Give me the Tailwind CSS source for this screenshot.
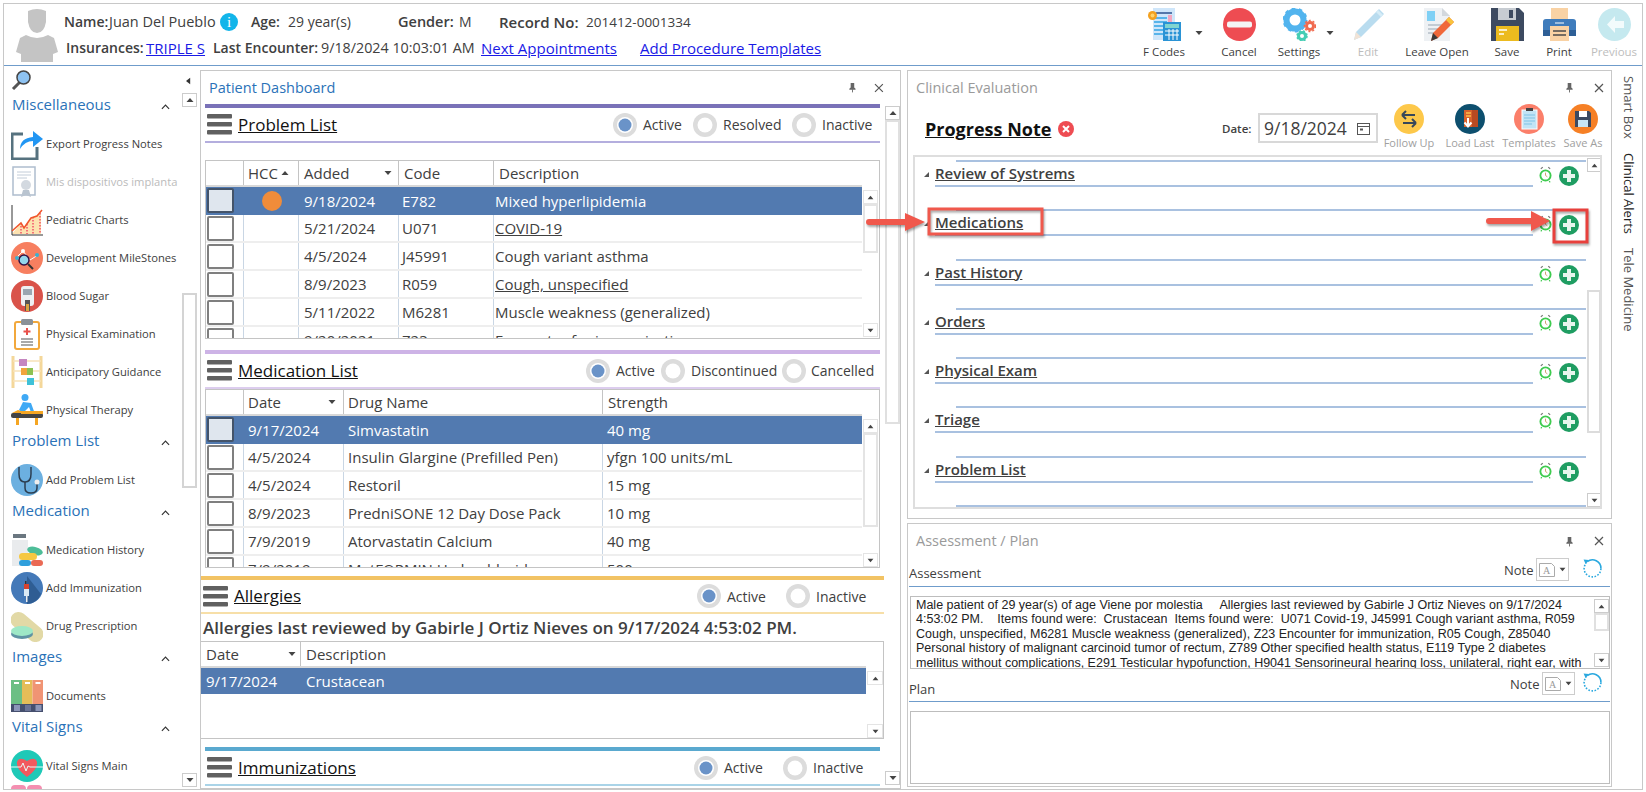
<!DOCTYPE html>
<html lang="en">
<head>
  <meta charset="UTF-8" />
  <title>Progress Note</title>
  <script src="https://cdn.jsdelivr.net/npm/@tailwindcss/browser@4"></script>
</head>
<body class="bg-white">
<svg class="hidden">
  <symbol id="up" viewBox="0 0 8 6"><path d="M4 1 7.5 5H.5z" fill="#444"/></symbol>
  <symbol id="down" viewBox="0 0 8 6"><path d="M.5 1h7L4 5z" fill="#444"/></symbol>
  <symbol id="left" viewBox="0 0 6 8"><path d="M5 0v8L0 4z" fill="#333"/></symbol>
  <symbol id="menu" viewBox="0 0 25 21"><rect x="0" y="0" width="25" height="4.5" rx="1" fill="#606060"/><rect x="0" y="8" width="25" height="4.5" rx="1" fill="#606060"/><rect x="0" y="16" width="25" height="4.5" rx="1" fill="#606060"/></symbol>
  <symbol id="chev" viewBox="0 0 10 6"><path d="M1 5l4-4 4 4" fill="none" stroke="#333" stroke-width="1.3"/></symbol>
  <symbol id="pin" viewBox="0 0 10 12"><path d="M3 1h4v5l1.5 1.500v1h-7v-1L3 6z" fill="#666"/><rect x="4.500" y="8" width="1" height="3.500" fill="#666"/></symbol>
  <symbol id="close" viewBox="0 0 10 10"><path d="M1 1l8 8M9 1l-8 8" stroke="#555" stroke-width="1.200"/></symbol>
  <symbol id="clock" viewBox="0 0 14 18"><path d="M2 3l2-2M12 3l-2-2" stroke="#777" stroke-width="1.300"/><circle cx="7" cy="10" r="5.500" fill="#fff" stroke="#3ecb4f" stroke-width="2"/><path d="M7 7v3l2 1.500" fill="none" stroke="#c96" stroke-width="1"/><path d="M3 16l-1 1.500M11 16l1 1.500" stroke="#3ecb4f" stroke-width="1.200"/></symbol>
  <symbol id="plus" viewBox="0 0 20 20"><circle cx="10" cy="10" r="10" fill="#1f9d62"/><path d="M8 4h4v4h4v4h-4v4H8v-4H4V8h4z" fill="#e8f6ee"/></symbol>
  <symbol id="note" viewBox="0 0 18 14"><path d="M.5.500h12l3 3v10H.5z" fill="#fff" stroke="#aaa"/><text x="4" y="11" font-size="10" fill="#999" font-family="Liberation Serif">A</text></symbol>
  <symbol id="refresh" viewBox="0 0 20 20"><path d="M5 3.500A8 8 0 0 1 18 10" fill="none" stroke="#29a8df" stroke-width="1.500"/><path d="M18 10a8 8 0 0 1-16 0 8 8 0 0 1 2-5" fill="none" stroke="#29a8df" stroke-width="1.500" stroke-dasharray="1.500 1.500"/><path d="M1.500 1.500l5 .5-3 4z" fill="#29a8df"/></symbol>
  <symbol id="radioOn" viewBox="0 0 24 24"><circle cx="12" cy="12" r="12" fill="#dcdcdc"/><circle cx="12" cy="12" r="8" fill="#fff"/><circle cx="12" cy="12" r="6.500" fill="#6a93c8"/></symbol>
  <symbol id="radioOff" viewBox="0 0 24 24"><circle cx="12" cy="12" r="12" fill="#dcdcdc"/><circle cx="12" cy="12" r="7.500" fill="#fff"/></symbol>
</svg>

<div class="relative w-[1646px] h-[792px] overflow-hidden bg-white font-['Open_Sans',sans-serif] text-[#404040]">
  <div class="mt-[3px] ml-[3px] w-[1640px] h-[787px] border border-[#c8c8c8] flex flex-col">

    <!-- Patient header -->
    <header class="h-[62px] shrink-0 border-b border-[#6f9ccb] flex">
      <div class="w-[60px] shrink-0 pl-[10px] pt-[4px]">
        <svg width="46" height="54" viewBox="0 0 46 54"><path d="M14 3q9-4 18 0v11q-2 11-9 11t-9-11z" fill="#c4c4c4"/><path d="M12 27q11 6 22 0l6 3 4 14-5 2v8H7v-8l-5-2 4-14z" fill="#c4c4c4"/></svg>
      </div>
      <div class="w-[770px] shrink-0 text-[14px] leading-[20px]">
        <div class="flex items-center h-[20px] mt-[8px] whitespace-nowrap">
          <span class="w-[45px] font-semibold">Name:</span>
          <span class="w-[111px] text-[14.500px]">Juan Del Pueblo</span>
          <span class="w-[18px] h-[18px] rounded-full bg-[#12b5ea] text-white text-center text-[15px] leading-[18px] font-['Liberation_Serif',serif]">i</span>
          <span class="w-[37px] ml-[13px] font-semibold">Age:</span>
          <span class="w-[110px]">29 year(s)</span>
          <span class="w-[61px] font-semibold text-[14.500px]">Gender:</span>
          <span class="w-[40px]">M</span>
          <span class="w-[87px] font-semibold text-[15px]">Record No:</span>
          <span class="text-[13.500px]">201412-0001334</span>
        </div>
        <div class="flex items-center h-[20px] mt-[6px] ml-[2px] whitespace-nowrap">
          <span class="w-[80px] font-semibold">Insurances:</span>
          <a class="w-[67px] text-[15px] text-[#1a1ae6] underline">TRIPLE S</a>
          <span class="w-[108px] font-semibold">Last Encounter:</span>
          <span class="w-[160px] text-[14.300px]">9/18/2024 10:03:01 AM</span>
          <a class="w-[159px] text-[15px] text-[#1a1ae6] underline">Next Appointments</a>
          <a class="text-[15px] text-[#1a1ae6] underline">Add Procedure Templates</a>
        </div>
      </div>
      <!-- Toolbar -->
      <div class="flex text-[11.5px] text-center pt-[4px] ml-[298px]">
        <div class="w-[64px] flex flex-col items-center">
          <svg width="33" height="33" viewBox="0 0 33 33"><rect x="5" y="0" width="22" height="32" fill="#cfe6fa"/><rect x="8" y="4" width="16" height="2" fill="#5577aa"/><rect x="20" y="7" width="4" height="10" fill="#f4a6c0"/><path d="M6 10h13M6 14h13M6 18h13M6 22h13M6 26h13" stroke="#58b4ea" stroke-width="2"/><rect x="15" y="14" width="18" height="19" fill="#2a93d5"/><rect x="17" y="16" width="14" height="4" fill="#7fd4d0"/><path d="M17 23h14M17 27h14M21 21v11M25 21v11M29 21v11" stroke="#fff" stroke-width="1"/><circle cx="4.500" cy="7.500" r="4.500" fill="#f3a11f"/><circle cx="4.500" cy="7.500" r="2" fill="#ffd36b"/></svg>
          <span class="mt-[2px] leading-[18px]">F Codes</span>
        </div>
        <div class="w-[10px] pt-[22px] -ml-[1px] mr-[1px]"><svg width="8" height="6"><use href="#down"/></svg></div>
        <div class="w-[66px] flex flex-col items-center">
          <svg width="33" height="33" viewBox="0 0 33 33"><circle cx="16.500" cy="16.500" r="16.500" fill="#ee4c52"/><rect x="4" y="13.500" width="25" height="6" rx="2" fill="#f4f4f4"/></svg>
          <span class="mt-[2px] leading-[18px]">Cancel</span>
        </div>
        <div class="w-[54px] flex flex-col items-center">
          <svg width="33" height="33" viewBox="0 0 33 33"><circle cx="12" cy="12" r="8.500" fill="none" stroke="#52b4ee" stroke-width="6"/><circle cx="12" cy="12" r="11" fill="none" stroke="#52b4ee" stroke-width="3" stroke-dasharray="3.500 3.400"/><circle cx="27" cy="18" r="3.500" fill="none" stroke="#f06a4f" stroke-width="3"/><circle cx="27" cy="18" r="5.500" fill="none" stroke="#f06a4f" stroke-width="1.500" stroke-dasharray="2 2"/><circle cx="19" cy="28" r="3.500" fill="none" stroke="#45cdb4" stroke-width="3"/><circle cx="19" cy="28" r="5" fill="none" stroke="#45cdb4" stroke-width="1.500" stroke-dasharray="2 2"/></svg>
          <span class="mt-[2px] leading-[18px]">Settings</span>
        </div>
        <div class="w-[17px] pt-[22px]"><svg width="8" height="6"><use href="#down"/></svg></div>
        <div class="w-[50px] flex flex-col items-center text-[#bdbdbd]">
          <svg width="33" height="33" viewBox="0 0 33 33"><path d="M27 1l5 5L9 29l-7 3 2-8z" fill="#b9dcef"/><path d="M4 24l5 5-7 3z" fill="#f1e3d6"/><path d="M25 3l5 5" stroke="#d6ecf7" stroke-width="3"/></svg>
          <span class="mt-[2px] leading-[18px]">Edit</span>
        </div>
        <div class="w-[88px] flex flex-col items-center">
          <svg width="33" height="33" viewBox="0 0 33 33"><path d="M3 0h18l8 8v25H3z" fill="#eef1f4"/><path d="M21 0l8 8h-8z" fill="#d3d8dd"/><rect x="6" y="3" width="8" height="10" fill="#7fd0f5"/><path d="M7 17h14M7 21h11M7 25h8" stroke="#c3cbd3" stroke-width="2"/><path d="M28 9l5 5-16 16-7 3 2-8z" fill="#f0683a"/><path d="M28 9l5 5-3 3-5-5z" fill="#f8c33c"/><path d="M12 25l5 5-7 3z" fill="#3a3a3a"/></svg>
          <span class="mt-[2px] leading-[18px]">Leave Open</span>
        </div>
        <div class="w-[52px] flex flex-col items-center">
          <svg width="33" height="33" viewBox="0 0 33 33"><path d="M0 0h28l5 5v28H0z" fill="#3d4a60"/><rect x="7" y="0" width="18" height="12" fill="#c7ccd2"/><rect x="18" y="2" width="4" height="8" fill="#3d4a60"/><rect x="5" y="18" width="23" height="15" fill="#ecbb1f"/><path d="M8 22h8M8 26h5" stroke="#fff" stroke-width="1.500"/></svg>
          <span class="mt-[2px] leading-[18px]">Save</span>
        </div>
        <div class="w-[52px] flex flex-col items-center">
          <svg width="33" height="33" viewBox="0 0 33 33"><rect x="8" y="0" width="17" height="12" fill="#f9d2a4"/><path d="M0 14q0-3 3-3h27q3 0 3 3v12H0z" fill="#3f7cbc"/><rect x="0" y="22" width="33" height="6" fill="#2e5f96"/><rect x="7" y="18" width="19" height="15" fill="#f9d2a4"/><path d="M10 23h13M10 27h13" stroke="#4b4b4b" stroke-width="1.300"/><path d="M12 15h9" stroke="#fff" stroke-width="1"/></svg>
          <span class="mt-[2px] leading-[18px]">Print</span>
        </div>
        <div class="w-[58px] flex flex-col items-center text-[#bdbdbd]">
          <svg width="33" height="33" viewBox="0 0 33 33"><circle cx="16.500" cy="16.500" r="16.500" fill="#c5e9ef"/><path d="M17 8l-8 8.500 8 8.500v-5h9v-7h-9z" fill="#f2fbfc"/></svg>
          <span class="mt-[2px] leading-[18px]">Previous</span>
        </div>
      </div>
    </header>

    <main class="flex flex-1 min-h-0">
      <!-- Left menu -->
      <aside class="w-[196px] shrink-0 flex">
        <div class="w-[178px] shrink-0 overflow-hidden pl-[7px] text-[11.2px]">
          <div class="h-[27px] pt-[4px]">
            <svg width="20" height="20" viewBox="0 0 20 20"><path d="M9 12l-7 7" stroke="#555" stroke-width="3"/><circle cx="12.500" cy="7.500" r="6.500" fill="#8ec3f2" stroke="#444" stroke-width="1.500"/></svg>
          </div>

          <div class="h-[22px] mb-[10px] flex items-center pl-[1px] text-[15px] text-[#2a72b8]"><span class="w-[149px]">Miscellaneous</span><svg class="mt-[6px]" width="9" height="6"><use href="#chev"/></svg></div>
          <div class="h-[38px] flex items-center gap-[3px]">
            <svg width="32" height="32" viewBox="0 0 32 32"><path d="M12 6H1v25h25V19" fill="none" stroke="#56727f" stroke-width="3"/><path d="M9 21q0-11 13-12V3l10 8-10 8v-6q-8 0-13 8z" fill="#2196f3"/></svg>
            <span>Export Progress Notes</span>
          </div>
          <div class="h-[38px] flex items-center gap-[3px] text-[#bbb]">
            <svg width="32" height="32" viewBox="0 0 32 32"><rect x="2" y="1" width="22" height="28" fill="#fff" stroke="#aebdce" stroke-width="1.500"/><path d="M6 6h14M6 9h14M6 12h10" stroke="#c2ccd8"/><circle cx="15" cy="19" r="5" fill="#d3d9e0"/><path d="M12 24l-2 7 5-2 5 2-2-7z" fill="#b9c4d0"/></svg>
            <span>Mis dispositivos implanta</span>
          </div>
          <div class="h-[38px] flex items-center gap-[3px]">
            <svg width="32" height="32" viewBox="0 0 32 32"><path d="M1 30l9-11 3 5 7-10 10-5v21z" fill="#fde2b0"/><path d="M1 1v30h31" fill="none" stroke="#333" stroke-width="1"/><path d="M10 19v11M16 20v10M22 13v17M29 9v21" stroke="#e04" stroke-width="1" stroke-dasharray="1.500 1.500"/><path d="M1 27l9-8 3 5 7-10 6-2 5-6" fill="none" stroke="#f0552b" stroke-width="1.500"/></svg>
            <span>Pediatric Charts</span>
          </div>
          <div class="h-[38px] flex items-center gap-[3px]">
            <svg width="32" height="32" viewBox="0 0 32 32"><circle cx="16" cy="16" r="16" fill="#f77f60"/><path d="M5 16l7-7 7 9 8-5" fill="none" stroke="#fff"/><circle cx="13" cy="18" r="5" fill="#93d6ec" stroke="#314" stroke-width="1.500"/><path d="M17 22l5 5" stroke="#333" stroke-width="2"/><circle cx="6" cy="16" r="2" fill="#3ab0d0"/><circle cx="12" cy="9" r="2" fill="#fff"/><circle cx="26" cy="13" r="2" fill="#3ab0d0"/></svg>
            <span>Development MileStones</span>
          </div>
          <div class="h-[38px] flex items-center gap-[3px]">
            <svg width="32" height="32" viewBox="0 0 32 32"><circle cx="16" cy="16" r="16" fill="#d9534a"/><rect x="10" y="6" width="13" height="20" rx="3" fill="#eef0f2"/><rect x="12" y="9" width="9" height="6" fill="#9aa6b0"/><rect x="14" y="20" width="5" height="11" fill="#555"/><rect x="15" y="24" width="3" height="7" fill="#d9a441"/></svg>
            <span>Blood Sugar</span>
          </div>
          <div class="h-[38px] flex items-center gap-[3px]">
            <svg width="32" height="32" viewBox="0 0 32 32"><rect x="4" y="4" width="24" height="27" rx="2" fill="#fff" stroke="#f2a83c" stroke-width="2"/><rect x="10" y="1" width="12" height="6" rx="1.500" fill="#8b9197"/><path d="M16 10v7M12.500 13.500h7" stroke="#e8504a" stroke-width="2"/><path d="M10 21h12M10 24h12M10 27h12" stroke="#555" stroke-width="1.200"/></svg>
            <span>Physical Examination</span>
          </div>
          <div class="h-[38px] flex items-center gap-[3px]">
            <svg width="32" height="32" viewBox="0 0 32 32"><path d="M2 0v32M30 0v32" stroke="#f4d79a" stroke-width="3"/><path d="M2 5h28M2 15h28M2 25h28" stroke="#f7e2b8" stroke-width="1.500"/><rect x="8" y="3" width="8" height="7" fill="#c586c0"/><rect x="10" y="12" width="6" height="7" fill="#f1a43c"/><rect x="16" y="12" width="6" height="7" fill="#8cc152"/><rect x="16" y="22" width="7" height="7" fill="#3fc1d8"/></svg>
            <span>Anticipatory Guidance</span>
          </div>
          <div class="h-[38px] flex items-center gap-[3px]">
            <svg width="32" height="32" viewBox="0 0 32 32"><circle cx="14" cy="3.500" r="3.500" fill="#3fa9f5"/><path d="M12 8l8 1 4 11-3 1-3-8-6 6-4-3z" fill="#3fa9f5"/><rect x="0" y="19" width="32" height="5" rx="2" fill="#444"/><path d="M1 19l6-3 9 3z" fill="#f5a623"/><rect x="10" y="17" width="22" height="3" fill="#f5a623"/><rect x="5" y="24" width="3" height="7" fill="#f5a623"/><rect x="24" y="24" width="3" height="7" fill="#f5a623"/></svg>
            <span>Physical Therapy</span>
          </div>

          <div class="h-[22px] mb-[10px] flex items-center pl-[1px] text-[15px] text-[#2a72b8]"><span class="w-[149px]">Problem List</span><svg class="mt-[6px]" width="9" height="6"><use href="#chev"/></svg></div>
          <div class="h-[38px] flex items-center gap-[3px]">
            <svg width="32" height="32" viewBox="0 0 32 32"><circle cx="16" cy="16" r="16" fill="#6cb0e0"/><path d="M8 3v7q0 8 6 8t6-8V3" fill="none" stroke="#2c3e50" stroke-width="1.500"/><path d="M14 18v6q0 5 6 5t6-5v-4" fill="none" stroke="#2c3e50" stroke-width="1.500"/><circle cx="26" cy="18" r="2.500" fill="#eee"/></svg>
            <span>Add Problem List</span>
          </div>

          <div class="h-[22px] mb-[10px] flex items-center pl-[1px] text-[15px] text-[#2a72b8]"><span class="w-[149px]">Medication</span><svg class="mt-[6px]" width="9" height="6"><use href="#chev"/></svg></div>
          <div class="h-[38px] flex items-center gap-[3px]">
            <svg width="32" height="32" viewBox="0 0 32 32"><rect x="2" y="0" width="13" height="4" fill="#6b7780"/><path d="M1 6h16v26H1z" fill="#e9ebed"/><ellipse cx="24" cy="17" rx="8" ry="4" fill="#4dbd98" transform="rotate(15 24 17)"/><rect x="8" y="19" width="18" height="7" rx="3.500" fill="#f5c842"/><rect x="8" y="26" width="12" height="6" rx="3" fill="#2f9fdc"/><rect x="20" y="26" width="12" height="6" rx="3" fill="#ea6a55"/></svg>
            <span>Medication History</span>
          </div>
          <div class="h-[38px] flex items-center gap-[3px]">
            <svg width="32" height="32" viewBox="0 0 32 32"><circle cx="16" cy="16" r="16" fill="#4479b8"/><path d="M16 4l14 18a16 16 0 0 1-14 10z" fill="#2f5d93"/><rect x="14" y="9" width="1.500" height="4" fill="#333"/><rect x="13" y="12" width="5" height="5" fill="#d8432f"/><rect x="13" y="17" width="5" height="7" fill="#d9e9f5"/><rect x="15" y="24" width="1.500" height="6" fill="#eee"/></svg>
            <span>Add Immunization</span>
          </div>
          <div class="h-[38px] flex items-center gap-[3px]">
            <svg width="32" height="32" viewBox="0 0 32 32"><rect x="-3" y="9" width="38" height="16" rx="8" fill="#e2d9a6" transform="rotate(40 16 17)"/><ellipse cx="11" cy="24" rx="11" ry="5" fill="#5f93a3"/><ellipse cx="11" cy="21" rx="11" ry="5" fill="#9ee8c6"/></svg>
            <span>Drug Prescription</span>
          </div>

          <div class="h-[22px] mb-[10px] flex items-center pl-[1px] text-[15px] text-[#2a72b8]"><span class="w-[149px]">Images</span><svg class="mt-[6px]" width="9" height="6"><use href="#chev"/></svg></div>
          <div class="h-[38px] flex items-center gap-[3px]">
            <svg width="32" height="32" viewBox="0 0 32 32"><rect x="0" y="0" width="11" height="24" fill="#6cbf84"/><rect x="11" y="0" width="10.500" height="24" fill="#e5bd58"/><rect x="21.500" y="0" width="10.500" height="24" fill="#f09474"/><rect x="0" y="24" width="32" height="8" fill="#454f6e"/><path d="M3 3h5M14 3h5M24.500 3h5" stroke="#fff" stroke-width="2"/><rect x="3" y="25" width="6" height="6" fill="#8c96b8"/><rect x="14" y="25" width="6" height="6" fill="#6a7396"/><rect x="24.500" y="25" width="6" height="6" fill="#8c96b8"/></svg>
            <span>Documents</span>
          </div>

          <div class="h-[22px] mb-[10px] flex items-center pl-[1px] text-[15px] text-[#2a72b8]"><span class="w-[149px]">Vital Signs</span><svg class="mt-[6px]" width="9" height="6"><use href="#chev"/></svg></div>
          <div class="h-[38px] flex items-center gap-[3px]">
            <svg width="32" height="32" viewBox="0 0 32 32"><circle cx="16" cy="16" r="16" fill="#1fc9b7"/><path d="M16 27Q5 19 6 12q2-6 10-1 8-5 10 1 1 7-10 15z" fill="#f2595e"/><path d="M0 17h10l2-4 3 8 2-5 2 1h13" fill="none" stroke="#e8fbf9" stroke-width="1"/></svg>
            <span>Vital Signs Main</span>
          </div>
          <div class="h-[4px] w-[32px] flex gap-[1px] overflow-hidden"><div class="w-[15px] h-[8px] rounded-full bg-[#f48fb1]"></div><div class="w-[15px] h-[8px] rounded-full bg-[#f48fb1]"></div></div>
        </div>
        <div class="w-[15px] shrink-0 relative">
          <svg class="absolute left-[4px] top-[11px]" width="5" height="8"><use href="#left"/></svg>
          <div class="mt-[27px] h-[14px] border border-[#ccc] flex items-center justify-center"><svg width="8" height="6"><use href="#up"/></svg></div>
          <div class="mt-[186px] h-[195px] border-2 border-[#d4d4d4]"></div>
          <div class="mt-[285px] h-[14px] border border-[#ccc] flex items-center justify-center"><svg width="8" height="6"><use href="#down"/></svg></div>
        </div>
      </aside>

      <!-- Patient dashboard -->
      <section class="w-[701px] shrink-0 mt-[4px] border border-[#c8c8c8] flex">
        <div class="w-[683px] shrink-0 overflow-hidden">
          <div class="h-[33px] flex items-center pl-[8px] text-[14.500px] text-[#2a72b8]">
            <span class="w-[648px]">Patient Dashboard</span>
            <svg width="9" height="11"><use href="#pin"/></svg>
            <svg class="ml-[17px]" width="10" height="10"><use href="#close"/></svg>
          </div>

          <div class="px-[4px]">
            <div class="h-[4px] bg-[#7a72b8]"></div>
            <div class="h-[33px] flex items-center pl-[2px]">
              <svg width="25" height="21"><use href="#menu"/></svg>
              <span class="w-[375px] ml-[6px] text-[17px] text-[#111] underline">Problem List</span>
              <div class="w-[80px] flex items-center gap-[6px] text-[14px]"><svg width="24" height="24"><use href="#radioOn"/></svg>Active</div>
              <div class="w-[99px] flex items-center gap-[6px] text-[14px]"><svg width="24" height="24"><use href="#radioOff"/></svg>Resolved</div>
              <div class="flex items-center gap-[6px] text-[14px]"><svg width="24" height="24"><use href="#radioOff"/></svg>Inactive</div>
            </div>
            <div class="h-[2px] bg-[#b4aede]"></div>

            <div class="mt-[17px] h-[179px] border border-[#c4c4c4] flex overflow-hidden text-[15px]">
              <div class="w-[656px] shrink-0 overflow-hidden">
                <div class="h-[26px] flex items-center border-b-2 border-[#d8d8d8]">
                  <div class="w-[38px] h-full border-r border-[#c4c4c4]"></div>
                  <div class="w-[55px] h-full border-r border-[#c4c4c4] flex items-center pl-[4px] gap-[3px]">HCC<svg width="8" height="6"><use href="#up"/></svg></div>
                  <div class="w-[100px] h-full border-r border-[#c4c4c4] flex items-center pl-[5px]"><span class="w-[80px]">Added</span><svg width="8" height="6"><use href="#down"/></svg></div>
                  <div class="w-[95px] h-full border-r border-[#c4c4c4] flex items-center pl-[5px]">Code</div>
                  <div class="pl-[5px]">Description</div>
                </div>
                <div class="h-[28px] flex items-center bg-[#527ab0] text-white">
                  <div class="w-[38px] h-full border-r border-[#527ab0] pl-[1px] pt-[1px]"><div class="w-[27px] h-[25px] bg-[#dfe6ee] border-2 border-[#44546a] rounded-[2px]"></div></div>
                  <div class="w-[55px] h-full flex items-center justify-center"><div class="w-[20px] h-[20px] rounded-full bg-[#f08c3a]"></div></div>
                  <div class="w-[100px] pl-[5px]">9/18/2024</div>
                  <div class="w-[95px] pl-[3px]">E782</div>
                  <div class="pl-[1px]">Mixed hyperlipidemia</div>
                </div>
                <div class="h-[28px] flex items-center border-b-2 border-[#eeeeee]">
                  <div class="w-[38px] h-full border-r border-[#c9d6e4] pl-[1px] pt-[1px]"><div class="w-[27px] h-[25px] bg-white border-2 border-[#7f7f7f] rounded-[2px]"></div></div>
                  <div class="w-[55px] h-full border-r border-[#c9d6e4]"></div>
                  <div class="w-[100px] pl-[5px] h-full flex items-center border-r border-[#c9d6e4]">5/21/2024</div>
                  <div class="w-[95px] pl-[3px] h-full flex items-center border-r border-[#c9d6e4]">U071</div>
                  <div class="pl-[1px] underline">COVID-19</div>
                </div>
                <div class="h-[28px] flex items-center border-b-2 border-[#eeeeee]">
                  <div class="w-[38px] h-full border-r border-[#c9d6e4] pl-[1px] pt-[1px]"><div class="w-[27px] h-[25px] bg-white border-2 border-[#7f7f7f] rounded-[2px]"></div></div>
                  <div class="w-[55px] h-full border-r border-[#c9d6e4]"></div>
                  <div class="w-[100px] pl-[5px] h-full flex items-center border-r border-[#c9d6e4]">4/5/2024</div>
                  <div class="w-[95px] pl-[3px] h-full flex items-center border-r border-[#c9d6e4]">J45991</div>
                  <div class="pl-[1px]">Cough variant asthma</div>
                </div>
                <div class="h-[28px] flex items-center border-b-2 border-[#eeeeee]">
                  <div class="w-[38px] h-full border-r border-[#c9d6e4] pl-[1px] pt-[1px]"><div class="w-[27px] h-[25px] bg-white border-2 border-[#7f7f7f] rounded-[2px]"></div></div>
                  <div class="w-[55px] h-full border-r border-[#c9d6e4]"></div>
                  <div class="w-[100px] pl-[5px] h-full flex items-center border-r border-[#c9d6e4]">8/9/2023</div>
                  <div class="w-[95px] pl-[3px] h-full flex items-center border-r border-[#c9d6e4]">R059</div>
                  <div class="pl-[1px] underline">Cough, unspecified</div>
                </div>
                <div class="h-[28px] flex items-center border-b-2 border-[#eeeeee]">
                  <div class="w-[38px] h-full border-r border-[#c9d6e4] pl-[1px] pt-[1px]"><div class="w-[27px] h-[25px] bg-white border-2 border-[#7f7f7f] rounded-[2px]"></div></div>
                  <div class="w-[55px] h-full border-r border-[#c9d6e4]"></div>
                  <div class="w-[100px] pl-[5px] h-full flex items-center border-r border-[#c9d6e4]">5/11/2022</div>
                  <div class="w-[95px] pl-[3px] h-full flex items-center border-r border-[#c9d6e4]">M6281</div>
                  <div class="pl-[1px]">Muscle weakness (generalized)</div>
                </div>
                <div class="h-[28px] flex items-center border-b-2 border-[#eeeeee]">
                  <div class="w-[38px] h-full border-r border-[#c9d6e4] pl-[1px] pt-[1px]"><div class="w-[27px] h-[25px] bg-white border-2 border-[#7f7f7f] rounded-[2px]"></div></div>
                  <div class="w-[55px] h-full border-r border-[#c9d6e4]"></div>
                  <div class="w-[100px] pl-[5px] h-full flex items-center border-r border-[#c9d6e4]">9/20/2021</div>
                  <div class="w-[95px] pl-[3px] h-full flex items-center border-r border-[#c9d6e4]">Z23</div>
                  <div class="pl-[1px]">Encounter for immunization</div>
                </div>
              </div>
              <div class="w-[16px] shrink-0 pl-[1px]">
                <div class="mt-[29px] h-[14px] border border-[#e4e4e4] flex items-center justify-center"><svg width="7" height="5"><use href="#up"/></svg></div>
                <div class="h-[49px] border-2 border-[#e4e4e4]"></div>
                <div class="mt-[70px] h-[14px] border border-[#e4e4e4] flex items-center justify-center"><svg width="7" height="5"><use href="#down"/></svg></div>
              </div>
            </div>

            <div class="mt-[11px] h-[4px] bg-[#cdb3e6]"></div>
            <div class="h-[33px] flex items-center pl-[2px]">
              <svg width="25" height="21"><use href="#menu"/></svg>
              <span class="w-[348px] ml-[6px] text-[17px] text-[#111] underline">Medication List</span>
              <div class="w-[75px] flex items-center gap-[6px] text-[14px]"><svg width="24" height="24"><use href="#radioOn"/></svg>Active</div>
              <div class="w-[121px] flex items-center gap-[6px] text-[14px]"><svg width="24" height="24"><use href="#radioOff"/></svg>Discontinued</div>
              <div class="flex items-center gap-[5px] text-[14px]"><svg width="24" height="24"><use href="#radioOff"/></svg>Cancelled</div>
            </div>
            <div class="h-[2px] bg-[#dccdee]"></div>

            <div class="h-[179px] border border-[#c4c4c4] flex overflow-hidden text-[15px]">
              <div class="w-[656px] shrink-0 overflow-hidden">
                <div class="h-[26px] flex items-center border-b-2 border-[#d8d8d8]">
                  <div class="w-[38px] h-full border-r border-[#c4c4c4]"></div>
                  <div class="w-[100px] h-full border-r border-[#c4c4c4] flex items-center pl-[4px]"><span class="w-[80px]">Date</span><svg width="8" height="6"><use href="#down"/></svg></div>
                  <div class="w-[259px] h-full border-r border-[#c4c4c4] flex items-center pl-[4px]">Drug Name</div>
                  <div class="pl-[5px]">Strength</div>
                </div>
                <div class="h-[28px] flex items-center bg-[#527ab0] text-white">
                  <div class="w-[38px] h-full pl-[1px] pt-[1px]"><div class="w-[27px] h-[25px] bg-[#dfe6ee] border-2 border-[#44546a] rounded-[2px]"></div></div>
                  <div class="w-[100px] pl-[4px]">9/17/2024</div>
                  <div class="w-[259px] pl-[4px]">Simvastatin</div>
                  <div class="pl-[4px]">40 mg</div>
                </div>
                <div class="h-[28px] flex items-center border-b-2 border-[#eeeeee]">
                  <div class="w-[38px] h-full border-r border-[#c9d6e4] pl-[1px] pt-[1px]"><div class="w-[27px] h-[25px] bg-white border-2 border-[#7f7f7f] rounded-[2px]"></div></div>
                  <div class="w-[100px] pl-[4px] h-full flex items-center border-r border-[#c9d6e4]">4/5/2024</div>
                  <div class="w-[259px] pl-[4px] h-full flex items-center border-r border-[#c9d6e4]">Insulin Glargine (Prefilled Pen)</div>
                  <div class="pl-[4px]">yfgn 100 units/mL</div>
                </div>
                <div class="h-[28px] flex items-center border-b-2 border-[#eeeeee]">
                  <div class="w-[38px] h-full border-r border-[#c9d6e4] pl-[1px] pt-[1px]"><div class="w-[27px] h-[25px] bg-white border-2 border-[#7f7f7f] rounded-[2px]"></div></div>
                  <div class="w-[100px] pl-[4px] h-full flex items-center border-r border-[#c9d6e4]">4/5/2024</div>
                  <div class="w-[259px] pl-[4px] h-full flex items-center border-r border-[#c9d6e4]">Restoril</div>
                  <div class="pl-[4px]">15 mg</div>
                </div>
                <div class="h-[28px] flex items-center border-b-2 border-[#eeeeee]">
                  <div class="w-[38px] h-full border-r border-[#c9d6e4] pl-[1px] pt-[1px]"><div class="w-[27px] h-[25px] bg-white border-2 border-[#7f7f7f] rounded-[2px]"></div></div>
                  <div class="w-[100px] pl-[4px] h-full flex items-center border-r border-[#c9d6e4]">8/9/2023</div>
                  <div class="w-[259px] pl-[4px] h-full flex items-center border-r border-[#c9d6e4]">PredniSONE 12 Day Dose Pack</div>
                  <div class="pl-[4px]">10 mg</div>
                </div>
                <div class="h-[28px] flex items-center border-b-2 border-[#eeeeee]">
                  <div class="w-[38px] h-full border-r border-[#c9d6e4] pl-[1px] pt-[1px]"><div class="w-[27px] h-[25px] bg-white border-2 border-[#7f7f7f] rounded-[2px]"></div></div>
                  <div class="w-[100px] pl-[4px] h-full flex items-center border-r border-[#c9d6e4]">7/9/2019</div>
                  <div class="w-[259px] pl-[4px] h-full flex items-center border-r border-[#c9d6e4]">Atorvastatin Calcium</div>
                  <div class="pl-[4px]">40 mg</div>
                </div>
                <div class="h-[28px] flex items-center border-b-2 border-[#eeeeee]">
                  <div class="w-[38px] h-full border-r border-[#c9d6e4] pl-[1px] pt-[1px]"><div class="w-[27px] h-[25px] bg-white border-2 border-[#7f7f7f] rounded-[2px]"></div></div>
                  <div class="w-[100px] pl-[4px] h-full flex items-center border-r border-[#c9d6e4]">7/9/2019</div>
                  <div class="w-[259px] pl-[4px] h-full flex items-center border-r border-[#c9d6e4]">MetFORMIN Hydrochloride</div>
                  <div class="pl-[4px]">500 mg</div>
                </div>
              </div>
              <div class="w-[16px] shrink-0 pl-[1px]">
                <div class="mt-[29px] h-[14px] border border-[#e4e4e4] flex items-center justify-center"><svg width="7" height="5"><use href="#up"/></svg></div>
                <div class="h-[94px] border-2 border-[#e4e4e4]"></div>
                <div class="mt-[26px] h-[14px] border border-[#e4e4e4] flex items-center justify-center"><svg width="7" height="5"><use href="#down"/></svg></div>
              </div>
            </div>
          </div>

          <div class="mt-[8px] h-[4px] bg-[#f2c364]"></div>
          <div class="h-[32px] flex items-center pl-[2px]">
            <svg width="25" height="21"><use href="#menu"/></svg>
            <span class="w-[463px] ml-[6px] text-[17px] text-[#111] underline">Allergies</span>
            <div class="w-[89px] flex items-center gap-[6px] text-[14px]"><svg width="24" height="24"><use href="#radioOn"/></svg>Active</div>
            <div class="flex items-center gap-[6px] text-[14px]"><svg width="24" height="24"><use href="#radioOff"/></svg>Inactive</div>
          </div>
          <div class="h-[2px] bg-[#f7dfa8]"></div>
          <div class="h-[27px] flex items-center pl-[2px] text-[17px] font-semibold whitespace-nowrap">Allergies last reviewed by Gabirle J Ortiz Nieves on 9/17/2024 4:53:02 PM.</div>

          <div class="h-[98px] border border-[#c4c4c4] border-l-0 flex overflow-hidden text-[15px]">
            <div class="w-[665px] shrink-0">
              <div class="h-[26px] flex items-center border-b-2 border-[#d8d8d8]">
                <div class="w-[100px] h-full border-r border-[#c4c4c4] flex items-center pl-[5px]"><span class="w-[82px]">Date</span><svg width="8" height="6"><use href="#down"/></svg></div>
                <div class="pl-[5px]">Description</div>
              </div>
              <div class="h-[26px] flex items-center bg-[#527ab0] text-white">
                <div class="w-[100px] pl-[5px]">9/17/2024</div>
                <div class="pl-[5px]">Crustacean</div>
              </div>
            </div>
            <div class="w-[16px] shrink-0 ml-[1px]">
              <div class="mt-[29px] h-[14px] border border-[#e4e4e4] flex items-center justify-center"><svg width="7" height="5"><use href="#up"/></svg></div>
              <div class="mt-[39px] h-[14px] border border-[#e4e4e4] flex items-center justify-center"><svg width="7" height="5"><use href="#down"/></svg></div>
            </div>
          </div>

          <div class="px-[4px] mt-[8px]">
            <div class="h-[4px] bg-[#5aa9cf]"></div>
            <div class="h-[33px] flex items-center pl-[2px]">
              <svg width="25" height="21"><use href="#menu"/></svg>
              <span class="w-[456px] ml-[6px] text-[17px] text-[#111] underline">Immunizations</span>
              <div class="w-[89px] flex items-center gap-[6px] text-[14px]"><svg width="24" height="24"><use href="#radioOn"/></svg>Active</div>
              <div class="flex items-center gap-[6px] text-[14px]"><svg width="24" height="24"><use href="#radioOff"/></svg>Inactive</div>
            </div>
            <div class="h-[2px] bg-[#aad4e8]"></div>
          </div>
        </div>
        <div class="w-[15px] shrink-0 ml-[1px]">
          <div class="mt-[35px] h-[14px] border border-[#ccc] flex items-center justify-center"><svg width="8" height="6"><use href="#up"/></svg></div>
          <div class="h-[304px] border-2 border-[#e0e0e0]"></div>
          <div class="mt-[347px] h-[14px] border border-[#ccc] flex items-center justify-center"><svg width="8" height="6"><use href="#down"/></svg></div>
        </div>
      </section>

      <!-- Right column -->
      <div class="w-[705px] shrink-0 ml-[6px] mt-[4px] flex flex-col gap-[4px]">
        <section class="h-[449px] border border-[#c8c8c8]">
          <div class="h-[33px] flex items-center pl-[8px] text-[14.500px] text-[#9a9a9a]">
            <span class="w-[649px]">Clinical Evaluation</span>
            <svg width="9" height="11"><use href="#pin"/></svg>
            <svg class="ml-[20px]" width="10" height="10"><use href="#close"/></svg>
          </div>
          <div class="h-[51px] flex pl-[17px]">
            <div class="w-[297px] flex items-center h-[50px]">
              <span class="text-[18px] font-bold text-[#111] underline">Progress Note</span>
              <svg class="ml-[7px]" width="16" height="16" viewBox="0 0 16 16"><circle cx="8" cy="8" r="8" fill="#ee4c52"/><path d="M5 5l6 6M11 5l-6 6" stroke="#fff" stroke-width="2"/></svg>
            </div>
            <div class="w-[36px] pt-[16px] text-[11.500px] font-semibold">Date:</div>
            <div class="w-[120px] h-[30px] mt-[9px] border-2 border-[#d8d8d8] flex items-center pl-[4px] text-[17.500px]">
              <span class="w-[93px]">9/18/2024</span>
              <svg width="13" height="13" viewBox="0 0 13 13"><rect x=".5" y="1.500" width="12" height="11" fill="none" stroke="#555"/><path d="M.5 4.500h12" stroke="#555"/><rect x="3" y="6.500" width="3" height="2" fill="#555"/></svg>
            </div>
            <div class="w-[62px] flex flex-col items-center text-[11px] text-[#a0a0a0]">
              <svg width="30" height="30" viewBox="0 0 30 30"><circle cx="15" cy="15" r="15" fill="#fdc84a"/><path d="M8 11h13M8 11l4-4M8 11l4 4" fill="none" stroke="#37475a" stroke-width="2"/><path d="M22 19H9M22 19l-4-4M22 19l-4 4" fill="none" stroke="#37475a" stroke-width="2"/></svg>
              <span class="leading-[18px]">Follow Up</span>
            </div>
            <div class="w-[60px] flex flex-col items-center text-[11px] text-[#a0a0a0]">
              <svg width="30" height="30" viewBox="0 0 30 30"><circle cx="15" cy="15" r="15" fill="#0d4f6e"/><rect x="9" y="6" width="14" height="17" fill="#b84a22"/><rect x="9" y="6" width="8" height="17" fill="#d8622d"/><path d="M11 9h5M11 12h5" stroke="#fbc04a" stroke-width="1.500"/><path d="M13 14v8M9.500 18.500l3.500 4 3.500-4" fill="none" stroke="#fff" stroke-width="2"/></svg>
              <span class="leading-[18px]">Load Last</span>
            </div>
            <div class="w-[58px] flex flex-col items-center text-[11px] text-[#a0a0a0]">
              <svg width="30" height="30" viewBox="0 0 30 30"><circle cx="15" cy="15" r="15" fill="#fb7f6a"/><rect x="8" y="6" width="15" height="19" fill="#c2e4f5" stroke="#fff" stroke-width="1"/><rect x="12" y="4" width="7" height="3" fill="#444"/><path d="M10 11h11M10 14h11M10 17h11M10 20h8" stroke="#7fc3e6"/></svg>
              <span class="leading-[18px]">Templates</span>
            </div>
            <div class="w-[50px] flex flex-col items-center text-[11px] text-[#a0a0a0]">
              <svg width="30" height="30" viewBox="0 0 30 30"><circle cx="15" cy="15" r="15" fill="#f68026"/><path d="M7 7h14l2 2v14H7z" fill="#3d4a60"/><rect x="11" y="7" width="8" height="6" fill="#fff"/><rect x="10" y="16" width="10" height="7" fill="#c7e6f7"/></svg>
              <span class="leading-[18px]">Save As</span>
            </div>
          </div>

          <div class="ml-[5px] w-[689px] h-[354px] border-2 border-[#dedede] flex overflow-hidden">
            <div class="w-[671px] shrink-0 pt-[3px] text-[15px] font-semibold">
              <div class="h-[49.300px]"><div class="ml-[41px] w-[630px] h-[2px] bg-[#a9c1e0]"></div><div class="flex"><div class="w-[20px] pl-[8px] pt-[9px]"><svg width="7" height="7" viewBox="0 0 7 7"><path d="M6 1v5H1z" fill="#555"/></svg></div><div class="w-[598px] h-[25px] border-b-2 border-[#a9c1e0] leading-[22px]"><span class="underline">Review of Systrems</span></div><svg class="ml-[6px] mt-[4px]" width="13" height="17"><use href="#clock"/></svg><svg class="ml-[7px] mt-[4px]" width="20" height="20"><use href="#plus"/></svg></div></div>
              <div class="h-[49.300px]"><div class="ml-[41px] w-[630px] h-[2px] bg-[#a9c1e0]"></div><div class="flex"><div class="w-[20px] pl-[8px] pt-[9px]"><svg width="7" height="7" viewBox="0 0 7 7"><path d="M6 1v5H1z" fill="#555"/></svg></div><div class="w-[598px] h-[25px] border-b-2 border-[#a9c1e0] leading-[22px]"><span class="underline">Medications</span></div><svg class="ml-[6px] mt-[4px]" width="13" height="17"><use href="#clock"/></svg><svg class="ml-[7px] mt-[4px]" width="20" height="20"><use href="#plus"/></svg></div></div>
              <div class="h-[49.300px]"><div class="ml-[41px] w-[630px] h-[2px] bg-[#a9c1e0]"></div><div class="flex"><div class="w-[20px] pl-[8px] pt-[9px]"><svg width="7" height="7" viewBox="0 0 7 7"><path d="M6 1v5H1z" fill="#555"/></svg></div><div class="w-[598px] h-[25px] border-b-2 border-[#a9c1e0] leading-[22px]"><span class="underline">Past History</span></div><svg class="ml-[6px] mt-[4px]" width="13" height="17"><use href="#clock"/></svg><svg class="ml-[7px] mt-[4px]" width="20" height="20"><use href="#plus"/></svg></div></div>
              <div class="h-[49.300px]"><div class="ml-[41px] w-[630px] h-[2px] bg-[#a9c1e0]"></div><div class="flex"><div class="w-[20px] pl-[8px] pt-[9px]"><svg width="7" height="7" viewBox="0 0 7 7"><path d="M6 1v5H1z" fill="#555"/></svg></div><div class="w-[598px] h-[25px] border-b-2 border-[#a9c1e0] leading-[22px]"><span class="underline">Orders</span></div><svg class="ml-[6px] mt-[4px]" width="13" height="17"><use href="#clock"/></svg><svg class="ml-[7px] mt-[4px]" width="20" height="20"><use href="#plus"/></svg></div></div>
              <div class="h-[49.300px]"><div class="ml-[41px] w-[630px] h-[2px] bg-[#a9c1e0]"></div><div class="flex"><div class="w-[20px] pl-[8px] pt-[9px]"><svg width="7" height="7" viewBox="0 0 7 7"><path d="M6 1v5H1z" fill="#555"/></svg></div><div class="w-[598px] h-[25px] border-b-2 border-[#a9c1e0] leading-[22px]"><span class="underline">Physical Exam</span></div><svg class="ml-[6px] mt-[4px]" width="13" height="17"><use href="#clock"/></svg><svg class="ml-[7px] mt-[4px]" width="20" height="20"><use href="#plus"/></svg></div></div>
              <div class="h-[49.300px]"><div class="ml-[41px] w-[630px] h-[2px] bg-[#a9c1e0]"></div><div class="flex"><div class="w-[20px] pl-[8px] pt-[9px]"><svg width="7" height="7" viewBox="0 0 7 7"><path d="M6 1v5H1z" fill="#555"/></svg></div><div class="w-[598px] h-[25px] border-b-2 border-[#a9c1e0] leading-[22px]"><span class="underline">Triage</span></div><svg class="ml-[6px] mt-[4px]" width="13" height="17"><use href="#clock"/></svg><svg class="ml-[7px] mt-[4px]" width="20" height="20"><use href="#plus"/></svg></div></div>
              <div class="h-[49.300px]"><div class="ml-[41px] w-[630px] h-[2px] bg-[#a9c1e0]"></div><div class="flex"><div class="w-[20px] pl-[8px] pt-[9px]"><svg width="7" height="7" viewBox="0 0 7 7"><path d="M6 1v5H1z" fill="#555"/></svg></div><div class="w-[598px] h-[25px] border-b-2 border-[#a9c1e0] leading-[22px]"><span class="underline">Problem List</span></div><svg class="ml-[6px] mt-[4px]" width="13" height="17"><use href="#clock"/></svg><svg class="ml-[7px] mt-[4px]" width="20" height="20"><use href="#plus"/></svg></div></div>
              <div class="ml-[41px] w-[630px] h-[2px] bg-[#a9c1e0]"></div>
            </div>
            <div class="w-[14px] shrink-0 ml-[1px]">
              <div class="mt-[1px] h-[14px] border border-[#ccc] flex items-center justify-center"><svg width="7" height="5"><use href="#up"/></svg></div>
              <div class="mt-[118px] h-[143px] border-2 border-[#dcdcdc]"></div>
              <div class="mt-[60px] h-[14px] border border-[#ccc] flex items-center justify-center"><svg width="7" height="5"><use href="#down"/></svg></div>
            </div>
          </div>
        </section>

        <section class="h-[264px] border border-[#c8c8c8] px-[1px]">
          <div class="h-[34px] flex items-center pl-[7px] text-[14.500px] text-[#9a9a9a]">
            <span class="w-[649px]">Assessment / Plan</span>
            <svg width="9" height="11"><use href="#pin"/></svg>
            <svg class="ml-[20px]" width="10" height="10"><use href="#close"/></svg>
          </div>
          <div class="h-[29px] flex border-b border-[#6f9ccb] text-[13px]">
            <span class="w-[595px] pt-[6px]">Assessment</span>
            <span class="w-[32px] pt-[3px]">Note</span>
            <div class="w-[33px] h-[23px] border border-[#ccc] flex items-center justify-center gap-[2px]"><svg width="18" height="14"><use href="#note"/></svg><svg width="7" height="5"><use href="#down"/></svg></div>
            <svg class="ml-[13px]" width="21" height="21"><use href="#refresh"/></svg>
          </div>
          <div class="mt-[9px] ml-[1px] w-[700px] h-[73px] border border-[#bdbdbd] flex font-['Liberation_Sans',sans-serif] text-[12.500px] leading-[14.400px] text-[#222]">
            <div class="w-[683px] shrink-0 pl-[5px] pt-[1px] whitespace-pre overflow-hidden">Male patient of 29 year(s) of age Viene por molestia     Allergies last reviewed by Gabirle J Ortiz Nieves on 9/17/2024
4:53:02 PM.    Items found were:  Crustacean  Items found were:  U071 Covid-19, J45991 Cough variant asthma, R059
Cough, unspecified, M6281 Muscle weakness (generalized), Z23 Encounter for immunization, R05 Cough, Z85040
Personal history of malignant carcinoid tumor of rectum, Z789 Other specified health status, E119 Type 2 diabetes
mellitus without complications, E291 Testicular hypofunction, H9041 Sensorineural hearing loss, unilateral, right ear, with</div>
            <div class="w-[15px] shrink-0">
              <div class="mt-[2px] h-[14px] border border-[#ccc] flex items-center justify-center"><svg width="7" height="5"><use href="#up"/></svg></div>
              <div class="h-[18px] border-2 border-[#e0e0e0]"></div>
              <div class="mt-[22px] h-[14px] border border-[#ccc] flex items-center justify-center"><svg width="7" height="5"><use href="#down"/></svg></div>
            </div>
          </div>
          <div class="h-[33px] flex border-b border-[#6f9ccb] text-[13px]">
            <span class="w-[601px] pt-[11px]">Plan</span>
            <span class="w-[32px] pt-[6px]">Note</span>
            <div class="w-[33px] h-[23px] mt-[3px] border border-[#ccc] flex items-center justify-center gap-[2px]"><svg width="18" height="14"><use href="#note"/></svg><svg width="7" height="5"><use href="#down"/></svg></div>
            <svg class="ml-[7px] mt-[3px]" width="21" height="21"><use href="#refresh"/></svg>
          </div>
          <div class="mt-[9px] ml-[1px] w-[700px] h-[73px] border border-[#bdbdbd]"></div>
        </section>
      </div>

      <!-- Right tabs -->
      <div class="flex-1 pt-[10px] pl-[6px] flex flex-col items-start text-[13px]">
        <span class="h-[77px] text-[#555] [writing-mode:vertical-rl] whitespace-nowrap">Smart Box</span>
        <span class="h-[95px] text-[#222] [writing-mode:vertical-rl] whitespace-nowrap">Clinical Alerts</span>
        <span class="text-[#555] [writing-mode:vertical-rl] whitespace-nowrap">Tele Medicine</span>
      </div>
    </main>
  </div>

  <!-- Red callouts drawn over the screenshot -->
  <svg class="absolute left-[860px] top-[200px]" width="740" height="50" viewBox="0 0 740 50">
    <g style="filter:drop-shadow(1px 2px 1px rgba(0,0,0,.35))">
      <rect x="69" y="9" width="113" height="25" fill="none" stroke="#f0584c" stroke-width="3"/>
      <rect x="694" y="10" width="33" height="32" fill="none" stroke="#e8403c" stroke-width="3"/>
      <path d="M9 19h36v-6l20 9-20 9v-6H9q-3 0-3-3t3-3z" fill="#f0584c"/>
      <path d="M629 18h42v-7l19 10-19 10v-7h-42q-3 0-3-3t3-3z" fill="#f0584c"/>
    </g>
  </svg>
</div>
</body>
</html>
